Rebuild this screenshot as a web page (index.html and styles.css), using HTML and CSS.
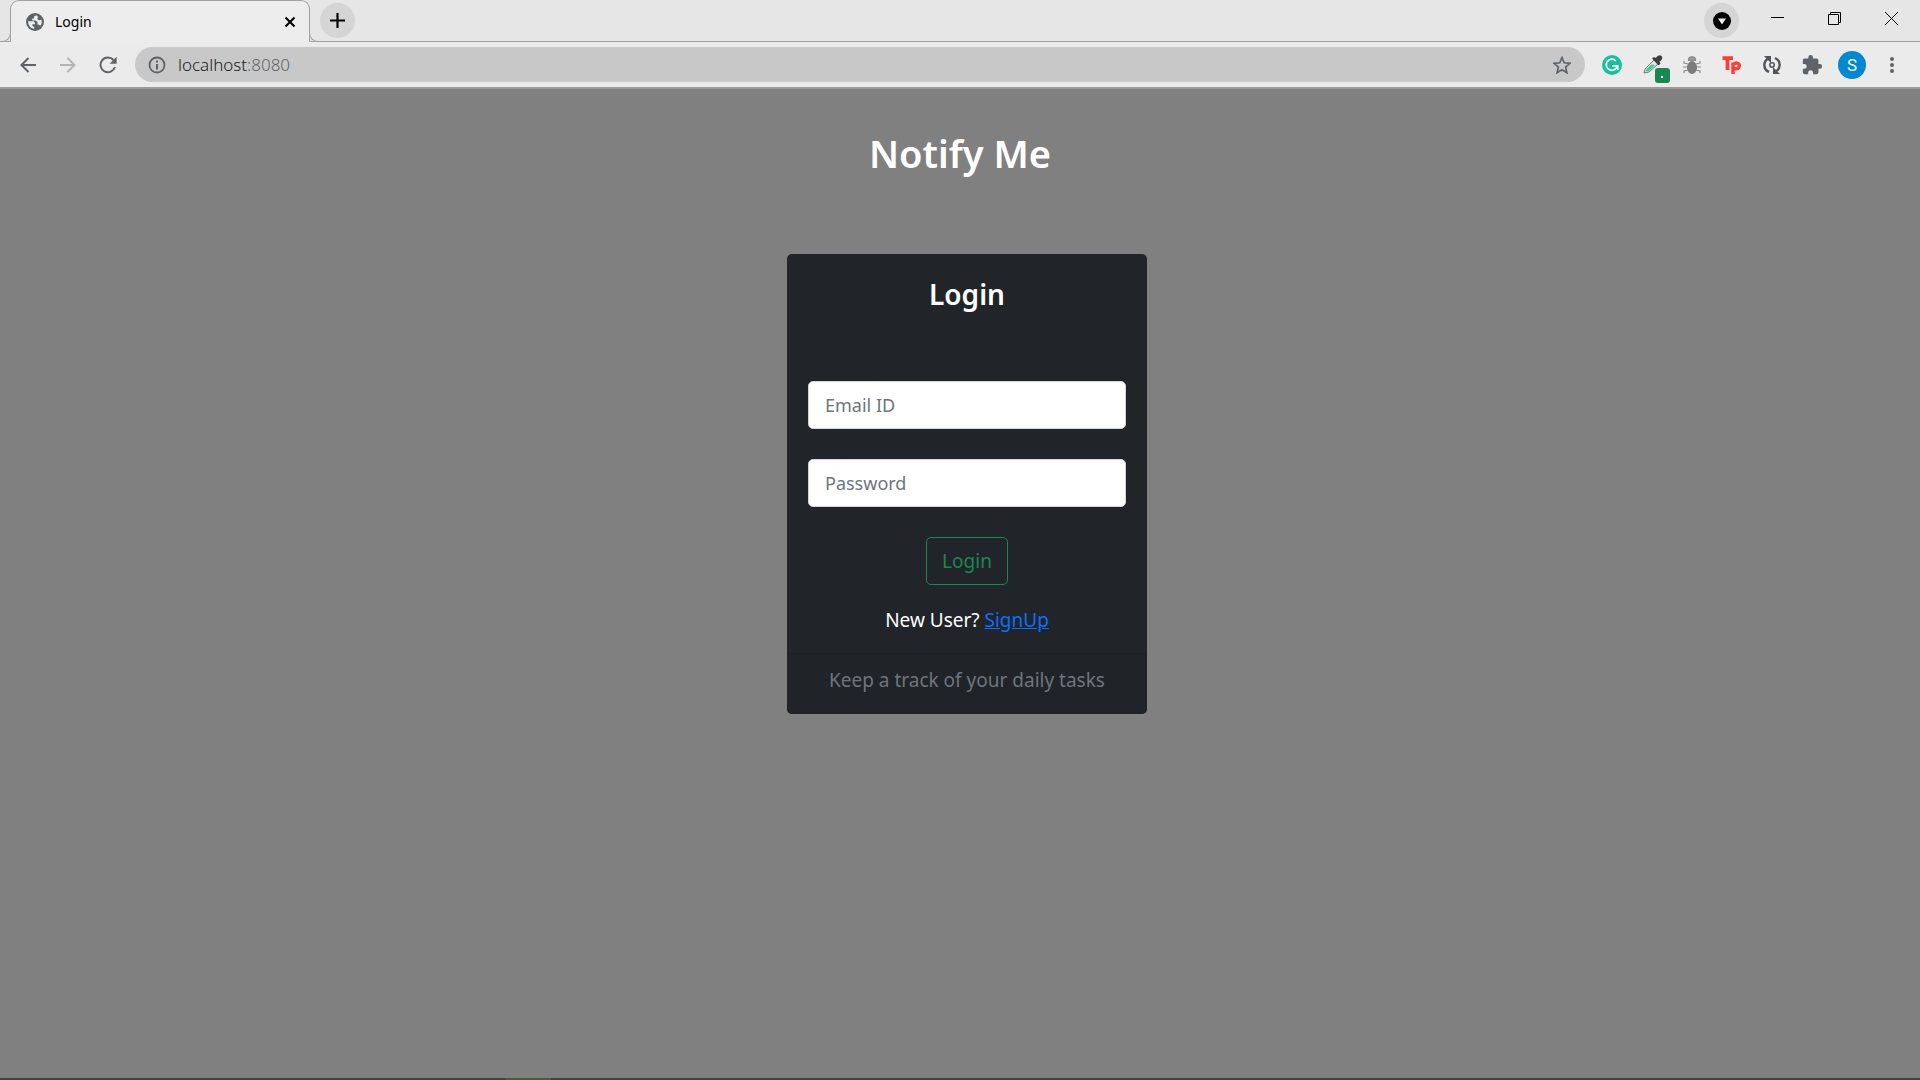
FILE: index.html
```html
<!DOCTYPE html>
<html lang="en">
<head>
<meta charset="utf-8">
<meta name="viewport" content="width=device-width, initial-scale=1">
<title>Login</title>
<link rel="stylesheet" href="styles.css">
</head>
<body>
<header class="browser">
  <div class="tabstrip">
    <div class="tab">
      <svg class="icon" width="18" height="18" viewBox="0 0 18 18" aria-hidden="true"><circle cx="9" cy="9" r="9" fill="#5f6368"/><path d="M10 2c-.6 1.200-1 1.200-2 1.600v1.900H6.200v2h3.600l1.700 1.600v2.300h1.200l1.500 1.400c1-1.100 1.600-2.400 1.600-3.800 0-1-.2-1.800-.6-2.600-.7.900-2.900 1.100-3.500.1-.5-.8 0-2.100.6-2.500zM2.200 8.200c-.3 3.700 2.200 7 6 7.600v-1.600l-1.800-1.500v-1.500H9V9.800L7.500 8.200z" fill="#ededed"/></svg>
      <span class="tab-title">Login</span>
      <button class="tab-close" type="button" aria-label="Close tab"><svg width="12" height="12" viewBox="0 0 12 12"><path d="M1.500 1.500l9 9m0-9l-9 9" stroke="#000" stroke-width="2"/></svg></button>
    </div>
    <button class="round" type="button" aria-label="New tab"><svg width="15" height="15" viewBox="0 0 15 15"><path d="M7.500 0v15M0 7.500h15" stroke="#000" stroke-width="2.200"/></svg></button>
    <div class="window-controls">
      <button class="round" type="button" aria-label="Search tabs"><svg width="18" height="18" viewBox="0 0 18 18"><circle cx="9" cy="9" r="9"/><path d="M5 6.500h8L9 12.500z" fill="#ededed"/></svg></button>
      <button class="window-button" type="button" aria-label="Minimize"><svg width="13" height="13" viewBox="0 0 13 13"><path d="M0 5.500h13" stroke="#000"/></svg></button>
      <button class="window-button" type="button" aria-label="Restore"><svg width="13" height="13" viewBox="0 0 13 13"><path d="M.5 2.500h10v10H.5zM2.500 2.500V.500h10v10h-2" fill="none" stroke="#000"/></svg></button>
      <button class="window-button" type="button" aria-label="Close"><svg width="13" height="13" viewBox="0 0 13 13"><path d="M0 0l13 13m0-13L0 13" stroke="#000"/></svg></button>
    </div>
  </div>
  <div class="toolbar">
    <button class="tool" type="button" aria-label="Back"><svg width="16" height="16" viewBox="0 0 16 16"><path d="M16 8H1.500m7-7l-7 7 7 7" fill="none" stroke="#5f6368" stroke-width="2"/></svg></button>
    <button class="tool" type="button" aria-label="Forward"><svg width="16" height="16" viewBox="0 0 16 16"><path d="M0 8h14.500m-7-7l7 7-7 7" fill="none" stroke="#b4b4b6" stroke-width="2"/></svg></button>
    <button class="tool" type="button" aria-label="Reload"><svg width="18" height="18" viewBox="0 0 18 18"><path d="M14.500 4A7.400 7.400 0 1 0 16 11" fill="none" stroke="#5f6368" stroke-width="2"/><path d="M17.600.8v7h-7z" fill="#5f6368"/></svg></button>
    <div class="omnibox">
      <svg class="icon" width="18" height="18" viewBox="0 0 18 18" aria-hidden="true"><circle cx="9" cy="9" r="7.500" fill="none" stroke="#5f6368" stroke-width="1.800"/><path d="M8 4.500h2v2H8zM8 8h2v5.500H8z" fill="#5f6368"/></svg>
      <a class="url" href="#">localhost<span class="port">:8080</span></a>
      <button class="star" type="button" aria-label="Bookmark this tab"><svg width="18" height="18" viewBox="0 0 18 18"><path d="M9 1.500l2.200 5.300 5.800.5-4.400 3.800 1.300 5.600L9 13.700l-4.900 3 1.300-5.600L1 7.300l5.800-.5z" fill="none" stroke="#5f6368" stroke-width="1.700"/></svg></button>
    </div>
    <button class="tool" type="button" aria-label="Grammar"><svg width="20" height="20" viewBox="0 0 20 20"><circle cx="10" cy="10" r="10" fill="#15c39a"/><path d="M13.800 5.800A5.600 5.600 0 1 0 15.400 10.500M10 10.800h5.700v4.200" fill="none" stroke="#fff" stroke-width="1.700"/></svg></button>
    <button class="tool" type="button" aria-label="Color picker"><svg width="36" height="36" viewBox="-9 -8 36 36"><path d="M1 18l1-4L11 5l4 4-9 8z" fill="#e4e4e4" stroke="#777"/><path d="M2.500 16.500l1-2.500 5-4.500 3.500.5-6 6z" fill="#38cf8b"/><path d="M9 3.500l2-1.500 2 1c1.500-3 4-3.500 5.500-2s1 4-2 5.500l1 2-2 2z" fill="#3e3e3e"/><rect x="12" y="13" width="15" height="15" rx="3" fill="#198754"/><path d="M18 21h2v2h-2z" fill="#fff"/></svg></button>
    <button class="tool" type="button" aria-label="Debugger"><svg width="18" height="18" viewBox="0 0 18 18"><path d="M1 5v2l4 1m12-3v2l-4 1M0 11h5m13 0h-5M1 17v-2l4-1m12 3v-2l-4-1" fill="none" stroke="#8c8c8c" stroke-width="1.200"/><ellipse cx="9" cy="11.500" rx="5" ry="6.500" fill="#7c7c7c"/><path d="M5 4.500a4 4 0 0 1 8 0z" fill="#999" stroke="#777" stroke-width=".7"/></svg></button>
    <button class="tool" type="button" aria-label="Tp"><svg width="20" height="18" viewBox="0 0 20 18"><path d="M.5 2.200h10.500M5.500 2.500V14" fill="none" stroke="#fb3e3c" stroke-width="3.800"/><path d="M11 18V6.500m0 2.500c2-3.500 6.800-2 6.300 1-.5 3.200-4.500 3.800-6.300 1.500" fill="none" stroke="#fb3e3c" stroke-width="3.400"/></svg></button>
    <button class="tool" type="button" aria-label="Sync"><svg width="18" height="18" viewBox="0 0 18 18"><path d="M5.500 2.500A7.400 7.400 0 0 0 6 16M12.500 15.500A7.400 7.400 0 0 0 12 2" fill="none" stroke="#505357" stroke-width="2.400"/><path d="M1 0h7v7zM17 18h-7v-7z" fill="#505357"/><circle cx="9" cy="9" r="2.200" fill="none" stroke="#505357" stroke-width="1.500"/></svg></button>
    <button class="tool" type="button" aria-label="Extensions"><svg width="22" height="22" viewBox="0 0 24 24"><path d="M20.500 11H19V7c0-1.100-.9-2-2-2h-4V3.500a2.500 2.500 0 0 0-5 0V5H4c-1.100 0-2 .9-2 2v3.800h1.500a2.700 2.700 0 0 1 0 5.400H2V20c0 1.100.9 2 2 2h3.800v-1.500a2.700 2.700 0 0 1 5.400 0V22H17c1.100 0 2-.9 2-2v-4h1.500a2.500 2.500 0 0 0 0-5z" fill="#5f6368"/></svg></button>
    <button class="tool" type="button" aria-label="Profile"><span class="avatar">S</span></button>
    <button class="tool" type="button" aria-label="Menu"><svg width="4" height="16" viewBox="0 0 4 16"><circle cx="2" cy="2" r="2" fill="#5f6368"/><circle cx="2" cy="8" r="2" fill="#5f6368"/><circle cx="2" cy="14" r="2" fill="#5f6368"/></svg></button>
  </div>
</header>
<main class="page">
  <h1 class="brand">Notify Me</h1>
  <div class="card-row">
    <section class="card">
      <form class="card-body">
        <h2 class="card-title">Login</h2>
        <input class="field" type="email" placeholder="Email ID" aria-label="Email ID">
        <input class="field" type="password" placeholder="Password" aria-label="Password">
        <button class="submit" type="button">Login</button>
        <p class="signup">New User? <a class="signup-link" href="#">SignUp</a></p>
      </form>
      <footer class="card-footer">Keep a track of your daily tasks</footer>
    </section>
  </div>
</main>
<div class="taskbar-edge"><div class="taskbar-active"></div></div>
</body>
</html>
```
FILE: styles.css
```css
* {
  box-sizing: border-box;
}

body {
  margin: 0;
  min-height: 100vh;
  display: flex;
  flex-direction: column;
  background: #808080;
  color: #fff;
  font: 19px/30px "Noto Sans", "Open Sans", sans-serif;
}

button {
  padding: 0;
  border: 0;
  background: none;
  color: inherit;
  font: inherit;
}

svg {
  display: block;
}

.icon {
  flex: none;
}

/* Browser window */
.browser {
  background: #ebebeb;
  border-bottom: 2px solid #9b9b9b;
}

.tabstrip {
  display: flex;
  align-items: flex-start;
  height: 42px;
  padding-left: 10px;
  background: #e6e6e6;
  border-bottom: 1px solid #a0a0a0;
}

.tab {
  position: relative;
  display: flex;
  align-items: center;
  width: 300px;
  height: 42px;
  padding: 0 12px 0 15px;
  background: #ededed;
  border: 1px solid #a0a0a0;
  border-bottom: 0;
  border-radius: 9px 9px 0 0;
  color: #000;
}

/* Flared feet of the active tab */
.tab::before,
.tab::after {
  content: "";
  position: absolute;
  bottom: 0;
  width: 10px;
  height: 10px;
  background: #e6e6e6;
  border: 1px solid #a0a0a0;
  border-top: 0;
}

.tab::before {
  right: 100%;
  border-left: 0;
  border-bottom-right-radius: 9px;
}

.tab::after {
  left: 100%;
  border-right: 0;
  border-bottom-left-radius: 9px;
}

.tab-title {
  flex: 1;
  padding-left: 11px;
  font-size: 14px;
}

.tab-close {
  display: grid;
  place-items: center;
  width: 14px;
  height: 14px;
}

.round {
  display: grid;
  place-items: center;
  width: 35px;
  height: 35px;
  margin: 3px 10px 0;
  border-radius: 50%;
  background: #d5d5d5;
}

.window-controls {
  display: flex;
  margin-left: auto;
}

.window-button {
  display: grid;
  place-items: center;
  width: 57px;
  height: 37px;
}

.toolbar {
  display: flex;
  align-items: center;
  height: 45px;
  padding: 0 8px;
}

.tool {
  display: grid;
  place-items: center;
  flex: none;
  width: 40px;
  height: 36px;
}

.omnibox {
  flex: 1;
  display: flex;
  align-items: center;
  height: 35px;
  margin: 0 7px;
  padding: 0 14px 0 13px;
  border-radius: 18px;
  background: #c8c8c8;
}

.url {
  flex: 1;
  padding-left: 12px;
  color: #202124;
  font-size: 17px;
  font-weight: 300;
  text-decoration: none;
}

.port {
  color: #5f6368;
}

.avatar {
  width: 28px;
  height: 28px;
  border-radius: 50%;
  background: #0288d1;
  color: #fff;
  font: 17px/28px Roboto, sans-serif;
}

/* Login page */
.page {
  flex: 1;
  text-align: center;
}

.brand {
  margin: 0;
  padding: 40px 0 77px;
  font-size: 38px;
  line-height: 48px;
  font-weight: 600;
}

.card-row {
  display: flex;
  justify-content: center;
  padding-left: 14px;
}

.card {
  width: 360px;
  border-radius: 5px;
  background: #212529;
}

.card-body {
  display: flex;
  flex-direction: column;
  align-items: center;
  padding: 22px 21px 18px;
}

.card-title {
  margin: 0 0 69px;
  font-size: 28px;
  line-height: 36px;
  font-weight: 600;
}

.field {
  width: 100%;
  height: 48px;
  margin-bottom: 30px;
  padding: 0 16px;
  border: 1px solid #ced4da;
  border-radius: 5px;
  background: #fff;
  color: #212529;
  font: inherit;
  font-size: 18px;
}

.field::placeholder {
  color: #6c757d;
  opacity: 1;
}

.submit {
  height: 48px;
  padding: 0 15px;
  border: 1px solid #198754;
  border-radius: 5px;
  color: #198754;
}

.signup {
  margin: 20px 0 0;
}

.signup-link {
  color: #0d6efd;
}

.card-footer {
  padding: 11px 20px 19px;
  border-top: 1px solid #1d2124;
  border-radius: 0 0 5px 5px;
  background: #202428;
  color: #6c757d;
}

/* Top edge of the desktop taskbar */
.taskbar-edge {
  height: 2px;
  padding-left: 506px;
  background: #41443b;
}

.taskbar-active {
  width: 45px;
  height: 2px;
  background: #4a5c3b;
}
```
